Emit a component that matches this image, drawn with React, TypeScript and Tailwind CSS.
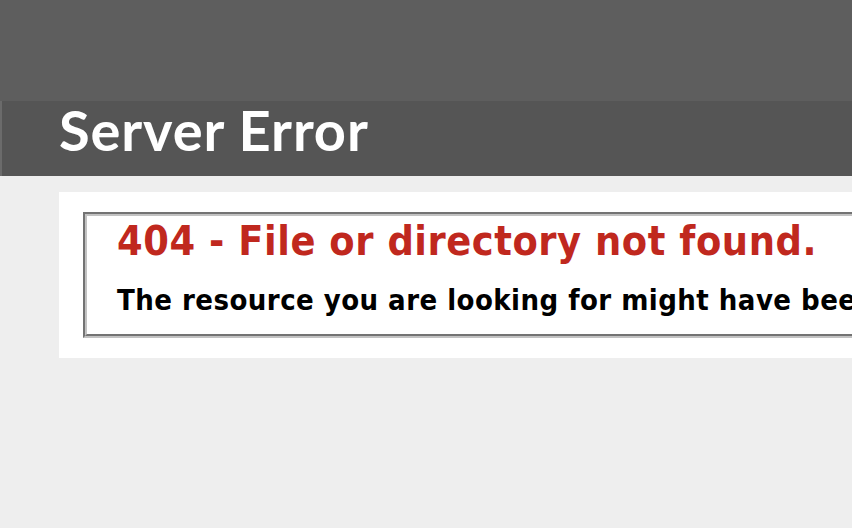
export default function App() {
  return (
    <div className="w-[852px] h-[528px] overflow-hidden bg-[#eeeeee] font-['DejaVu_Sans_Condensed','DejaVu_Sans',Verdana,sans-serif]">
      {/* top band */}
      <div className="h-[101px] bg-[#5e5e5e]" />

      {/* header */}
      <header className="flex h-[75px] bg-[#555555]">
        <div className="w-[2px] shrink-0 bg-[#6b6b6b]" />
        <h1 className="pl-[57px] pt-[1px] text-[56px] leading-none tracking-[0.9px] font-bold text-white whitespace-nowrap font-['Lato','Open_Sans',sans-serif]">
          Server Error
        </h1>
      </header>

      {/* content */}
      <main className="pl-[59px] pt-[16px]">
        <div className="w-[1600px] bg-white px-[24px] py-[20px]">
          <div className="border-2 border-t-[#737373] border-l-[#737373] border-r-[#c2c2c2] border-b-[#c2c2c2]">
            <div className="border-2 border-t-[#c2c2c2] border-l-[#c2c2c2] border-r-[#737373] border-b-[#737373] pl-[30px] pt-[5px] pb-[19px]">
              <h2 className="text-[41px] leading-none tracking-[0.55px] font-bold text-[#c0281e] whitespace-nowrap">
                404 - File or directory not found.
              </h2>
              <h3 className="mt-[24px] text-[29px] leading-none tracking-[0.45px] font-bold text-black whitespace-nowrap">
                The resource you are looking for might have been removed, had its name changed, or is temporarily unavailable.
              </h3>
            </div>
          </div>
        </div>
      </main>
    </div>
  )
}
